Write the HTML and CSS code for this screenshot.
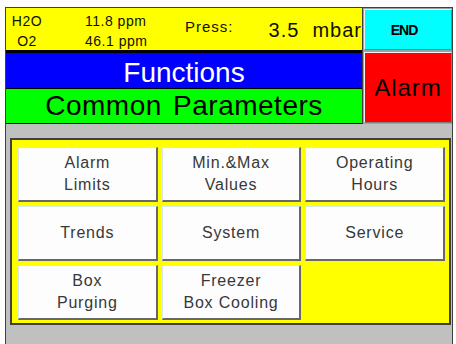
FILE: index.html
```html
<html lang="en">
    <head>
        <meta charset="UTF-8">
        <meta name="viewport" content="width=device-width, initial-scale=1.0">
        <title>Functions</title>
        <link rel="stylesheet" href="styles.css">
    </head>
    <body>
    <div class="screen">
        <div class="header">
            <div class="main">
                <div class="status">
                    <div class="gases">H2O<br>O2</div>
                    <div class="values">11.8 ppm<br>46.1 ppm</div>
                    <div class="press">Press:</div>
                    <div class="pressure">3.5&nbsp; mbar</div>
                </div>
                <div class="sep"></div>
                <div class="title">Functions</div>
                <div class="subtitle">Common Parameters</div>
            </div>
            <div class="side">
                <div class="end"><span>END</span></div>
                <div class="alarm">Alarm</div>
            </div>
        </div>

        <div class="panel">
            <div class="btn">Alarm<br>Limits</div>
            <div class="btn">Min.&amp;Max<br>Values</div>
            <div class="btn">Operating<br>Hours</div>
            <div class="btn">Trends</div>
            <div class="btn">System</div>
            <div class="btn">Service</div>
            <div class="btn">Box<br>Purging</div>
            <div class="btn">Freezer<br>Box Cooling</div>
        </div>
    </div>
    </body>
</html>
```

FILE: styles.css
```css
body {
    margin: 0;
    background: #ffffff;
    font-family: "Liberation Sans", Arial, sans-serif;
    color: #000000;
}

.screen {
    margin: 7px 0 0 5px;
    width: 446px;
    height: 337px;
    border: 1px solid #404040;
    border-bottom: none;
    background: #c0c0c0;
}

.header {
    display: grid;
    grid-template-columns: 356px 1fr;
}

/* top status line */
.status {
    height: 42px;
    background: #ffff00;
    display: flex;
    align-items: flex-start;
    font-size: 14px;
    letter-spacing: 0.5px;
    color: #101000;
}

.gases {
    width: 42px;
    margin-top: 3px;
    line-height: 20px;
    text-align: center;
}

.values {
    width: 64px;
    margin: 3px 0 0 37px;
    line-height: 20px;
}

.press {
    margin: 9px 0 0 36px;
    font-size: 15px;
    line-height: 20px;
    letter-spacing: 1px;
}

.pressure {
    margin: 10px 0 0 auto;
    font-size: 20px;
    line-height: 24px;
    letter-spacing: 1px;
}

.sep {
    height: 3px;
    background: #000000;
}

.title {
    height: 35px;
    line-height: 39px;
    overflow: hidden;
    background: #0000ff;
    color: #ffffff;
    font-size: 28px;
    text-align: center;
}

.subtitle {
    height: 34px;
    line-height: 33px;
    border-top: 1px solid #000000;
    border-bottom: 1px solid #000000;
    background: #00ff00;
    font-size: 28px;
    letter-spacing: 0.5px;
    word-spacing: 3px;
    text-align: center;
}

/* right column buttons */
.side {
    display: flex;
    flex-direction: column;
    gap: 2px;
    padding: 1px 0 1px 1px;
    background: #a0a0a0;
    border-left: 1px solid #404040;
}

.end, .alarm {
    display: flex;
    align-items: center;
    justify-content: center;
    border-top: 1px solid #f0f0f0;
    border-left: 1px solid #f0f0f0;
    border-right: 1px solid #808080;
    border-bottom: 1px solid #808080;
}

.end {
    height: 39px;
    background: #00ffff;
    padding-right: 8px;
    font-size: 14px;
    font-weight: bold;
    letter-spacing: -1px;
}

.alarm {
    flex: 1;
    background: #ff0000;
    font-size: 24px;
    letter-spacing: 1px;
}

/* function grid */
.panel {
    margin: 14px 0 0 4px;
    width: 427px;
    display: grid;
    grid-template-columns: 1fr 1fr 1fr;
    grid-template-rows: 55px 55px 55px;
    gap: 4px;
    padding: 7px 4px 3px 6px;
    background: #ffff00;
    border: 2px solid #404040;
}

.btn {
    display: flex;
    align-items: center;
    justify-content: center;
    text-align: center;
    background: #fdfdfd;
    border-top: 1px solid #d8e8e8;
    border-left: 1px solid #d8e8e8;
    border-right: 2px solid #686868;
    border-bottom: 2px solid #686868;
    font-size: 16px;
    line-height: 22px;
    letter-spacing: 0.8px;
    color: #383838;
}
```
